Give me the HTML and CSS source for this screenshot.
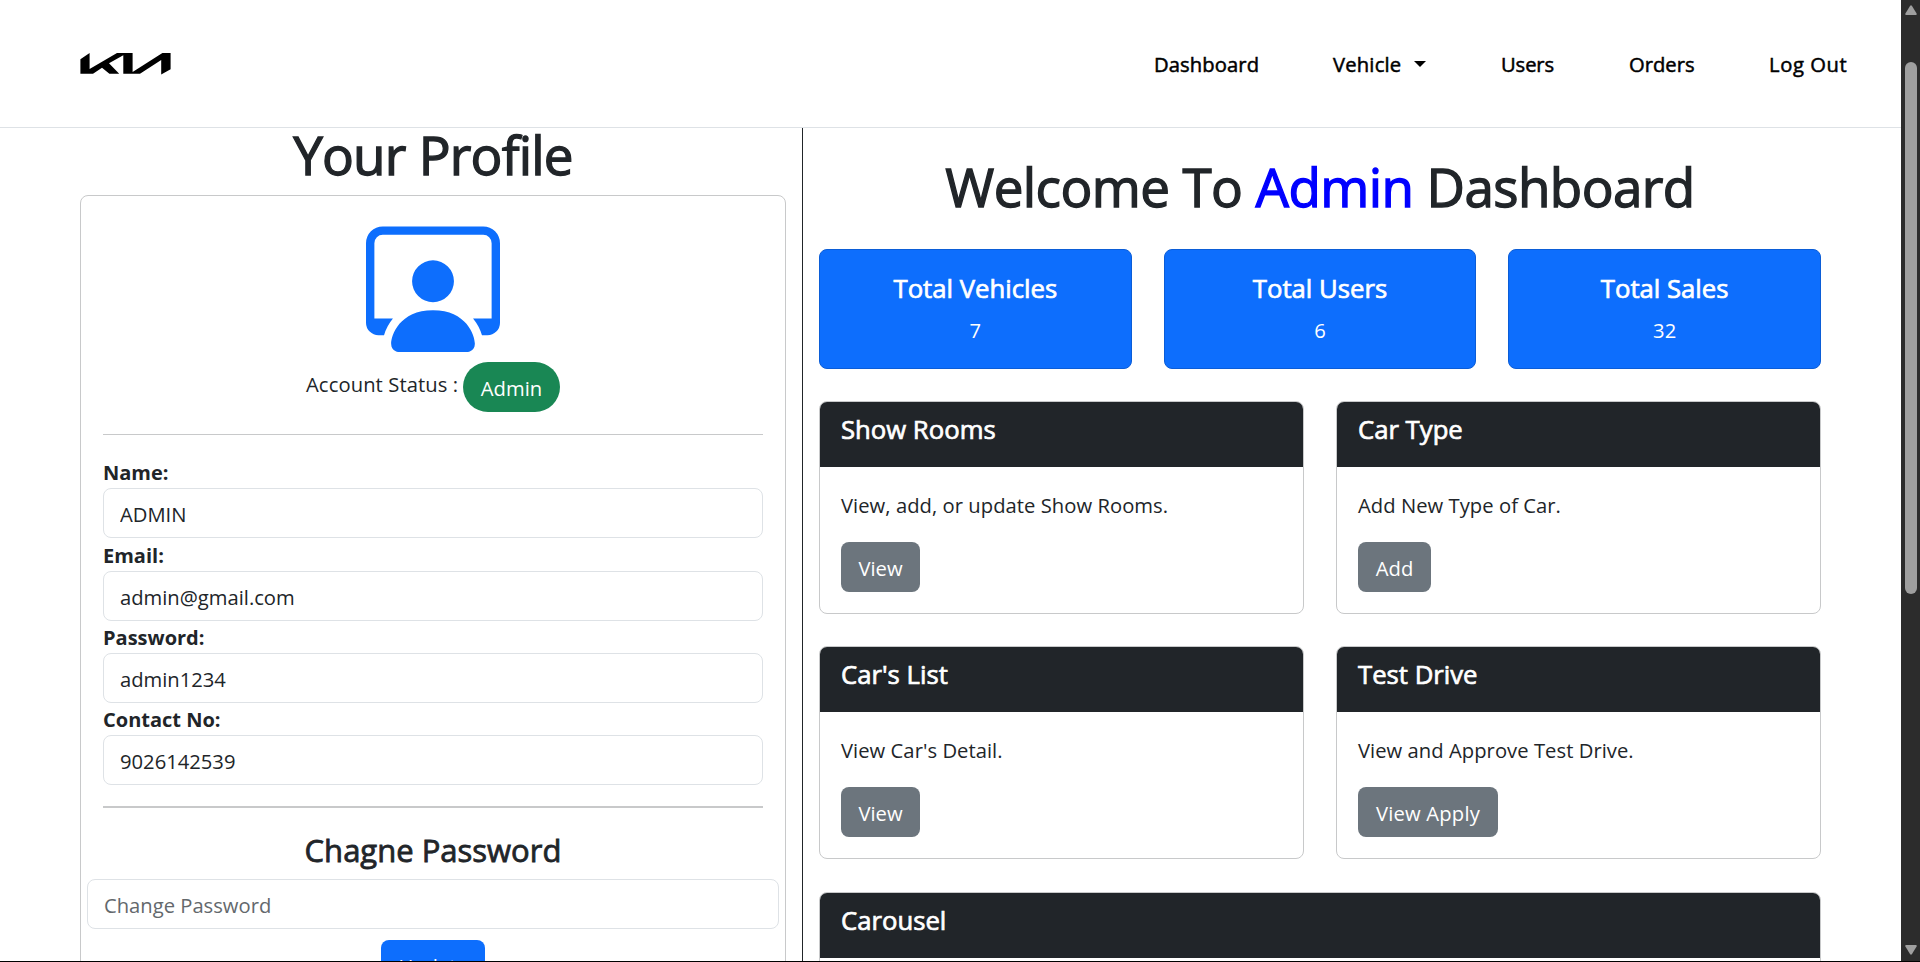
FILE: index.html
```html
<!DOCTYPE html>
<html lang="en">
<head>
<meta charset="utf-8">
<title>Admin Dashboard</title>
<link rel="stylesheet" href="styles.css">
</head>
<body>
<div class="window">
  <div class="page">
    <header class="navbar">
      <a class="brand" href="#" aria-label="Kia">
        <svg class="logo" viewBox="0 0 92 22"><polygon points="0.4,6.3 9.6,0 9.6,16 37,0 52.6,0 52.6,19 82.4,0 90.6,0 90.6,16.3 81.2,21.5 81.2,7 60,20.7 43.3,20.7 43.3,2.3 29,10.3 39.2,20.7 29.4,20.7 22,14.7 13,20.7 0.4,20.7"/></svg>
      </a>
      <nav class="menu">
        <a class="link w-dashboard" href="#">Dashboard</a>
        <a class="link w-vehicle" href="#">Vehicle<span class="caret"></span></a>
        <a class="link w-users" href="#">Users</a>
        <a class="link w-orders" href="#">Orders</a>
        <a class="link w-logout" href="#">Log Out</a>
      </nav>
    </header>
    <main class="content">
      <section class="profile">
        <h1 class="heading profile-title">Your Profile</h1>
        <div class="profile-card">
          <svg class="avatar" viewBox="0 0 16 16"><path d="M4 16s-1 0-1-1 1-4 5-4 5 3 5 4-1 1-1 1zm4-5.95a2.5 2.5 0 1 0 0-5 2.5 2.5 0 0 0 0 5"/><path d="M2 1a2 2 0 0 0-2 2v9.5A1.5 1.5 0 0 0 1.5 14h.653a5.4 5.4 0 0 1 1.066-2H1V3a1 1 0 0 1 1-1h12a1 1 0 0 1 1 1v9h-2.219c.554.654.89 1.373 1.066 2h.653a1.5 1.5 0 0 0 1.5-1.5V3a2 2 0 0 0-2-2z"/></svg>
          <div class="status"><span class="status-label">Account Status :</span><span class="pill">Admin</span></div>
          <hr class="rule">
          <div class="fields">
            <div class="field"><label class="label">Name:</label><input class="input" value="ADMIN"></div>
            <div class="field"><label class="label">Email:</label><input class="input" value="admin@gmail.com"></div>
            <div class="field"><label class="label">Password:</label><input class="input" value="admin1234"></div>
            <div class="field"><label class="label">Contact No:</label><input class="input" value="9026142539"></div>
          </div>
          <hr class="rule rule-thick">
          <h3 class="subheading">Chagne Password</h3>
          <input class="input input-wide" placeholder="Change Password">
          <button class="btn btn-primary">Update</button>
        </div>
      </section>
      <section class="dashboard">
        <h1 class="heading dashboard-title">Welcome To <span class="accent">Admin</span> Dashboard</h1>
        <div class="stats">
          <div class="stat"><h5 class="card-title">Total Vehicles</h5><p class="stat-value">7</p></div>
          <div class="stat"><h5 class="card-title">Total Users</h5><p class="stat-value">6</p></div>
          <div class="stat"><h5 class="card-title">Total Sales</h5><p class="stat-value">32</p></div>
        </div>
        <div class="panels">
          <article class="panel"><div class="panel-head"><h5 class="card-title">Show Rooms</h5></div><div class="panel-body"><p class="panel-text">View, add, or update Show Rooms.</p><button class="btn w-view">View</button></div></article>
          <article class="panel"><div class="panel-head"><h5 class="card-title">Car Type</h5></div><div class="panel-body"><p class="panel-text">Add New Type of Car.</p><button class="btn w-add">Add</button></div></article>
          <article class="panel"><div class="panel-head"><h5 class="card-title">Car's List</h5></div><div class="panel-body"><p class="panel-text">View Car's Detail.</p><button class="btn w-view">View</button></div></article>
          <article class="panel"><div class="panel-head"><h5 class="card-title">Test Drive</h5></div><div class="panel-body"><p class="panel-text">View and Approve Test Drive.</p><button class="btn w-apply">View Apply</button></div></article>
          <article class="panel panel-full"><div class="panel-head"><h5 class="card-title">Carousel</h5></div><div class="panel-body"></div></article>
        </div>
      </section>
    </main>
  </div>
  <aside class="scrollbar">
    <svg class="arrow" viewBox="0 0 12 10"><path d="M5 1Q6-.5 7 1L11.6 8.5Q12 10 11 10H1Q0 10 .4 8.5Z"/></svg>
    <div class="thumb"></div>
    <svg class="arrow arrow-down" viewBox="0 0 12 10"><path d="M5 9Q6 10.5 7 9L11.6 1.5Q12 0 11 0H1Q0 0 .4 1.5Z"/></svg>
  </aside>
</div>
</body>
</html>
```
FILE: styles.css
```css
* { box-sizing: border-box; }
body {
  margin: 0;
  background: #fff;
  color: #212529;
  font: 400 20.2px/30px "Open Sans", "Noto Sans", sans-serif;
}
h1, h3, h5, p { margin: 0; font-weight: 400; }

.window {
  display: flex;
  height: 962px;
  overflow: hidden;
  border-bottom: 1px solid #000;
}
.page { width: 1901px; height: 961px; overflow: hidden; }

/* Navigation */
.navbar {
  display: flex;
  align-items: center;
  justify-content: space-between;
  height: 128px;
  padding: 0 54px 0 80px;
  border-bottom: 1px solid #dee2e6;
}
.brand { display: flex; }
.logo { display: block; width: 92px; height: 22px; }
.menu { display: flex; gap: 75px; }
.link {
  display: flex;
  align-items: center;
  color: #000;
  -webkit-text-stroke: 0.5px;
  text-decoration: none;
  white-space: nowrap;
}
.w-dashboard { width: 104px; letter-spacing: 0.1px; }
.w-vehicle { width: 93px; justify-content: space-between; letter-spacing: 0.2px; }
.w-users { width: 53px; letter-spacing: -0.1px; }
.w-orders { width: 65px; }
.w-logout { width: 78px; letter-spacing: 0.6px; }
.caret {
  border: 6px solid transparent;
  border-top-color: #000;
  border-bottom: 0;
}

.content { display: flex; height: 833px; }
.heading {
  font-size: 53px;
  line-height: 55px;
  letter-spacing: -0.6px;
  text-align: center;
  white-space: nowrap;
  -webkit-text-stroke: 1.3px;
}

/* Profile column */
.profile {
  width: 803px;
  padding: 0 16px 0 80px;
  border-right: 1px solid #212529;
}
.profile-title { height: 67px; line-height: 54px; letter-spacing: -0.8px; }
.profile-card {
  display: flex;
  flex-direction: column;
  align-items: center;
  width: 706px;
  height: 900px;
  padding: 22px 6px 0;
  border: 1px solid #c8c9ca;
  border-radius: 8px;
}
.avatar { flex: none; width: 134px; height: 134px; fill: #0d6efd; }
.status { display: flex; gap: 5px; height: 82px; padding-top: 10px; }
.status-label { width: 152px; padding-top: 7px; letter-spacing: 0.1px; white-space: nowrap; }
.pill {
  width: 97px;
  height: 50px;
  border-radius: 25px;
  background: #198754;
  color: #fff;
  line-height: 52px;
  text-align: center;
}
.rule { flex: none; width: 660px; height: 1px; margin: 0; border: 0; background: #c8c9ca; }
.rule-thick { height: 2px; margin-top: 21px; }
.fields { display: grid; grid-auto-rows: 82.3px; width: 660px; height: 350px; padding-top: 23.4px; }
.field { display: flex; flex-direction: column; }
.label { font-size: 20px; font-weight: 700; line-height: 30px; }
.input {
  flex: none;
  width: 100%;
  height: 50px;
  padding: 2px 16px 0;
  border: 1px solid #dee2e6;
  border-radius: 8px;
  background: #fff;
  color: #212529;
  font: inherit;
}
.input::placeholder { color: #63686c; opacity: 1; }
.subheading { margin: 23px 0 10px; font-size: 31px; line-height: 38px; -webkit-text-stroke: 0.8px; }
.btn {
  display: block;
  height: 50px;
  padding: 2px 0 0;
  border: 0;
  border-radius: 8px;
  background: #6c757d;
  color: #fff;
  font: inherit;
  text-align: center;
  white-space: nowrap;
}
.btn-primary { flex: none; width: 104px; margin-top: 11px; background: #0d6efd; }
.w-view { width: 79px; }
.w-add { width: 73px; }
.w-apply { width: 140px; letter-spacing: 0.2px; }

/* Dashboard column */
.dashboard { width: 1018px; padding: 31px 0 0 16px; }
.dashboard-title { height: 90px; }
.accent { color: #00f; }
.stats { display: grid; grid-template-columns: repeat(3, 1fr); gap: 32px; }
.stat {
  height: 120px;
  padding-top: 24px;
  border: 1px solid #0b5dd7;
  border-radius: 8px;
  background: #0d6efd;
  color: #fff;
  text-align: center;
}
.card-title { font-size: 25.7px; line-height: 30px; white-space: nowrap; -webkit-text-stroke: 0.7px; }
.stat-value { padding-top: 11px; }
.panels {
  display: grid;
  grid-template-columns: 1fr 1fr;
  grid-auto-rows: 213px;
  gap: 32.6px 32px;
  padding-top: 31.8px;
}
.panel { border: 1px solid #c8c9ca; border-radius: 8px; overflow: hidden; }
.panel-full { grid-column: 1 / -1; }
.panel-head { height: 65px; padding: 13px 21px; background: #212529; color: #fff; }
.panel-body { padding: 23px 21px; }
.panel-text { margin-bottom: 22px; letter-spacing: 0.05px; }

/* Scrollbar */
.scrollbar {
  display: flex;
  flex-direction: column;
  align-items: center;
  width: 19px;
  padding: 5px 0 6px;
  background: #2c2c2c;
}
.arrow { display: block; width: 12px; height: 10px; fill: #9f9f9f; }
.arrow-down { margin-top: auto; }
.thumb { width: 12px; height: 532px; margin-top: 47px; border-radius: 6px; background: #9f9f9f; }
```
